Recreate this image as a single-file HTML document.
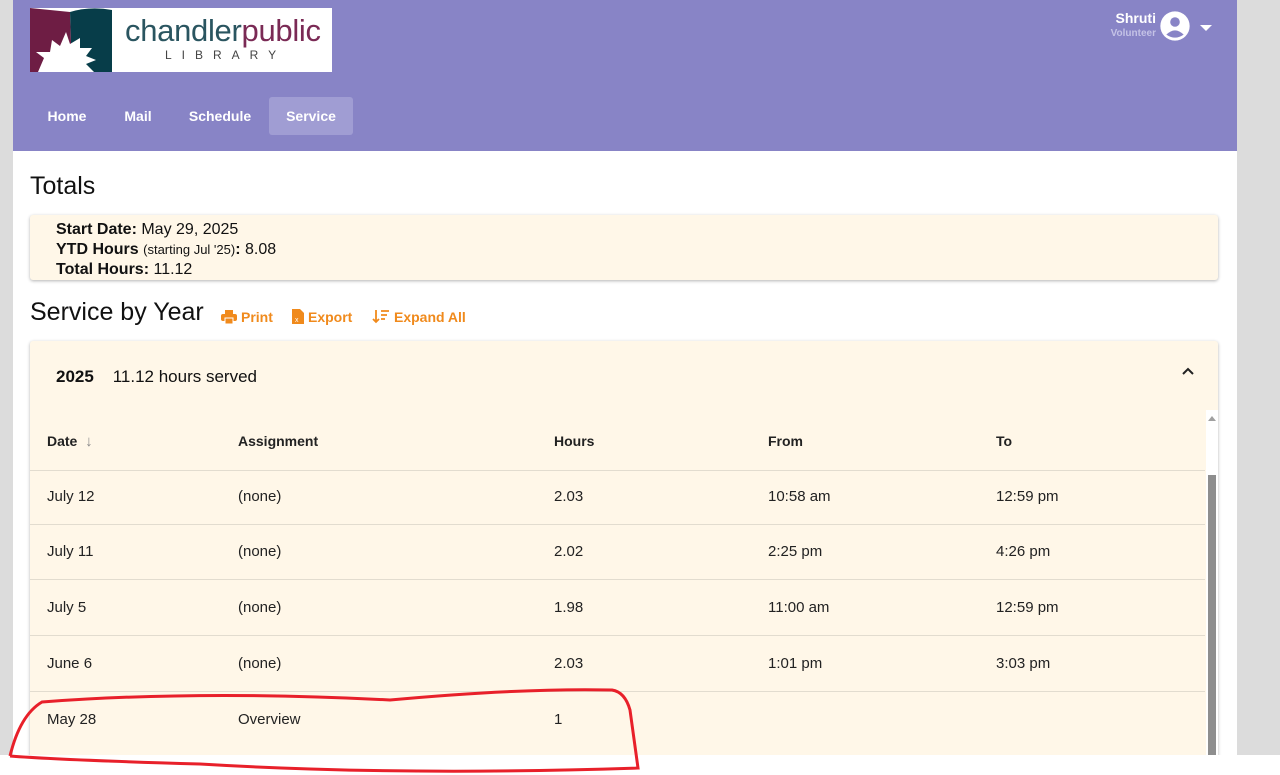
<!DOCTYPE html>
<html><head><meta charset="utf-8"><style>
*{box-sizing:border-box;margin:0;padding:0}
body{width:1280px;height:775px;overflow:hidden;background:#fff;font-family:"Liberation Sans",sans-serif;color:#222;position:relative}
.gl{position:absolute;left:0;top:0;width:13px;height:755px;background:#dcdcdc}
.gr{position:absolute;left:1237px;top:0;width:43px;height:755px;background:#dcdcdc}
.hdr{position:absolute;left:13px;top:0;width:1224px;height:151px;background:#8884c6}
.logo{position:absolute;left:30px;top:8px;width:302px;height:64px;background:#fff;overflow:hidden}
.nav a{position:absolute;top:97px;height:38px;line-height:38px;color:#fff;font-weight:bold;font-size:14px;text-align:center}
.abs{position:absolute}
.card{position:absolute;background:#fff7e8;box-shadow:0 1px 3px rgba(0,0,0,.3);border-radius:3px}
.row{position:absolute;left:30px;width:1175px;border-top:1px solid #e2dccf;font-size:15px}
.row span{position:absolute;top:0}
.or{color:#f08a1c;font-weight:bold;font-size:14px;position:absolute;top:309px}
</style></head><body>
<div class="gl"></div><div class="gr"></div>
<div class="hdr"></div>
<div class="logo">
<svg width="84" height="64" style="position:absolute;left:0;top:0">
<path d="M0 0 L40 4 L42 64 L0 64Z" fill="#6e1d44"/>
<path d="M40 4 Q60 -2 82 2 L82 64 L42 64Z" fill="#073d49"/>
<path d="M8 64 L14 50 L6 44 L20 44 L22 32 L30 38 L36 24 L40 36 L50 30 L50 40 L62 40 L56 48 L66 52 L56 56 L64 64Z" fill="#fff"/>
</svg>
<div class="abs" style="left:95px;top:5px;font-size:31px;letter-spacing:-0.3px;color:#2a5560">chandler<span style="color:#7a2a55">public</span></div>
<div class="abs" style="left:135px;top:40px;font-size:12px;letter-spacing:10px;color:#444">LIBRARY</div>
</div>
<div class="nav">
<a style="left:32px;width:70px">Home</a>
<a style="left:110px;width:56px">Mail</a>
<a style="left:176px;width:88px">Schedule</a>
<a style="left:269px;width:84px;background:#a09dd3;border-radius:3px">Service</a>
</div>
<div class="abs" style="left:1100px;top:10px;width:56px;text-align:right;color:#fff;font-weight:bold;font-size:14px">Shruti</div>
<div class="abs" style="left:1090px;top:28px;width:66px;text-align:right;color:#c4c2e6;font-weight:bold;font-size:10px">Volunteer</div>
<svg class="abs" style="left:1159px;top:10px" width="32" height="32" viewBox="0 0 24 24"><circle cx="12" cy="12" r="11" fill="#fff"/><circle cx="12" cy="9" r="3.6" fill="#8884c6"/><path d="M5.5 18.5 Q12 12 18.5 18.5 Q12 23 5.5 18.5Z" fill="#8884c6"/></svg>
<svg class="abs" style="left:1200px;top:25px" width="12" height="6"><path d="M0 0 L12 0 L6 6Z" fill="#fff"/></svg>

<div class="abs" style="left:30px;top:172px;font-size:25px;color:#111">Totals</div>
<div class="card" style="left:30px;top:215px;width:1188px;height:65px"></div>
<div class="abs" style="left:56px;top:220px;font-size:16px;line-height:20px;color:#111">
<b>Start Date:</b> May 29, 2025<br><b>YTD Hours</b> <span style="font-size:13px">(starting Jul '25)</span><b>:</b> 8.08<br><b>Total Hours:</b> 11.12</div>

<div class="abs" style="left:30px;top:298px;font-size:25px;color:#111">Service by Year</div>
<svg class="abs" style="left:221px;top:310px" width="16" height="14" viewBox="0 0 16 14"><rect x="4" y="0" width="8" height="4" fill="#f08a1c"/><rect x="0" y="4" width="16" height="7" rx="2" fill="#f08a1c"/><rect x="4" y="8" width="8" height="6" fill="#f08a1c" stroke="#fff" stroke-width="1"/></svg>
<span class="or" style="left:241px">Print</span>
<svg class="abs" style="left:292px;top:309px" width="12" height="15" viewBox="0 0 12 15"><path d="M0 0 H8 L12 4 V15 H0Z" fill="#f08a1c"/><text x="3" y="13" font-size="7" fill="#fff" font-family="Liberation Sans">x</text></svg>
<span class="or" style="left:308px">Export</span>
<svg class="abs" style="left:372px;top:309px" width="18" height="15" viewBox="0 0 18 15"><path d="M4 1 V13 M1 10 L4 13 L7 10" stroke="#f08a1c" stroke-width="1.8" fill="none"/><path d="M9 2 H17 M9 6 H15 M9 10 H13" stroke="#f08a1c" stroke-width="1.8"/></svg>
<span class="or" style="left:394px">Expand All</span>

<div class="card" style="left:30px;top:341px;width:1188px;height:420px"></div>
<div class="abs" style="left:56px;top:367px;font-size:17px;color:#111"><b>2025</b>&nbsp;&nbsp;&nbsp;&nbsp;11.12 hours served</div>
<svg class="abs" style="left:1182px;top:367px" width="12" height="8"><path d="M1 7 L6 2 L11 7" stroke="#222" stroke-width="2" fill="none"/></svg>
<div class="abs" style="left:47px;top:433px;font-size:14px;font-weight:bold;color:#222">Date&nbsp; <span style="color:#888;font-weight:normal;font-size:15px">&#8595;</span></div>
<div class="abs" style="left:238px;top:433px;font-size:14px;font-weight:bold">Assignment</div>
<div class="abs" style="left:554px;top:433px;font-size:14px;font-weight:bold">Hours</div>
<div class="abs" style="left:768px;top:433px;font-size:14px;font-weight:bold">From</div>
<div class="abs" style="left:996px;top:433px;font-size:14px;font-weight:bold">To</div>

<div class="row" style="top:470px;height:55px"><span style="left:17px;top:17px">July 12</span><span style="left:208px;top:17px">(none)</span><span style="left:524px;top:17px">2.03</span><span style="left:738px;top:17px">10:58 am</span><span style="left:966px;top:17px">12:59 pm</span></div>
<div class="row" style="top:524px;height:56px"><span style="left:17px;top:18px">July 11</span><span style="left:208px;top:18px">(none)</span><span style="left:524px;top:18px">2.02</span><span style="left:738px;top:18px">2:25 pm</span><span style="left:966px;top:18px">4:26 pm</span></div>
<div class="row" style="top:579px;height:57px"><span style="left:17px;top:19px">July 5</span><span style="left:208px;top:19px">(none)</span><span style="left:524px;top:19px">1.98</span><span style="left:738px;top:19px">11:00 am</span><span style="left:966px;top:19px">12:59 pm</span></div>
<div class="row" style="top:635px;height:56px"><span style="left:17px;top:19px">June 6</span><span style="left:208px;top:19px">(none)</span><span style="left:524px;top:19px">2.03</span><span style="left:738px;top:19px">1:01 pm</span><span style="left:966px;top:19px">3:03 pm</span></div>
<div class="row" style="top:691px;height:64px"><span style="left:17px;top:19px">May 28</span><span style="left:208px;top:19px">Overview</span><span style="left:524px;top:19px">1</span></div>

<div class="abs" style="left:1206px;top:410px;width:12px;height:345px;background:#fff"></div>
<svg class="abs" style="left:1207px;top:414px" width="10" height="8"><path d="M1 7 L5 2 L9 7Z" fill="#a0a0a0"/></svg>
<div class="abs" style="left:1208px;top:475px;width:8px;height:280px;background:#8e8e8e"></div>
<div class="abs" style="left:0;top:755px;width:1280px;height:20px;background:#fff"></div>

<svg class="abs" style="left:0;top:680px" width="650" height="95"><path d="M10 76 Q20 35 42 22 Q200 10 390 20 Q520 8 612 10 Q625 12 630 30 L638 88 Q400 96 200 84 Q60 80 10 76" stroke="#e8202a" stroke-width="3" fill="none"/></svg>
</body></html>
